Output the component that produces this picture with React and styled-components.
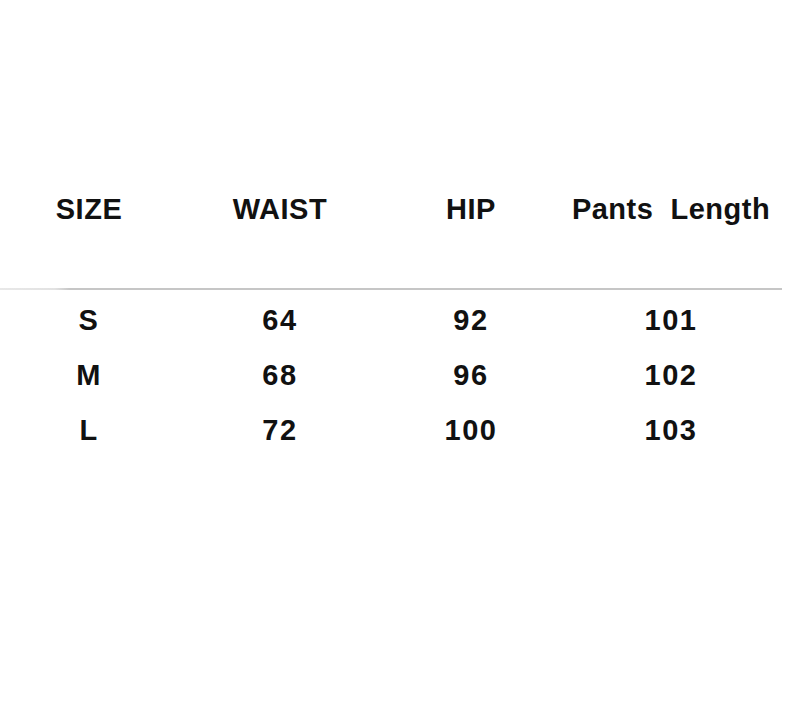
import styled, { createGlobalStyle } from "styled-components";

const GlobalStyle = createGlobalStyle`
    html, body {
        margin: 0;
        padding: 0;
        background: #ffffff;
    }
`

// 사이즈 표 전체
const ChartBlock = styled.div`
    width: 800px;
    height: 721px;
    padding-top: 180px;
    box-sizing: border-box;
    font-family: "Liberation Sans", Arial, sans-serif;
    color: #111111;
`

const Row = styled.div`
    display: grid;
    grid-template-columns: 178px 204px 178px 222px;
    height: ${props => props.height || 55}px;
    align-items: center;
`

const Cell = styled.div`
    text-align: center;
    font-size: 29px;
    font-weight: 700;
    letter-spacing: ${props => props.spacing || 0.5}px;
    line-height: 1;
    white-space: pre;
`

const Divider = styled.div`
    width: 782px;
    height: 2px;
    margin: 50px 0 3px;
    background: linear-gradient(to right, #e8e8e8 0px, #e2e2e2 55px, #c6c6c6 70px, #c6c6c6 100%);
`

const headers = ['SIZE', 'WAIST', 'HIP', 'Pants  Length']

const rows = [
    ['S', '64', '92', '101'],
    ['M', '68', '96', '102'],
    ['L', '72', '100', '103'],
]

const App = () => {
    return (
        <>
            <GlobalStyle />
            <ChartBlock>
                <Row height={58}>
                    {headers.map(h => <Cell key={h}>{h}</Cell>)}
                </Row>
                <Divider />
                {rows.map(r => (
                    <Row key={r[0]}>
                        {r.map((v, i) => <Cell key={i} spacing={1.5}>{v}</Cell>)}
                    </Row>
                ))}
            </ChartBlock>
        </>
    );
};

export default App;
